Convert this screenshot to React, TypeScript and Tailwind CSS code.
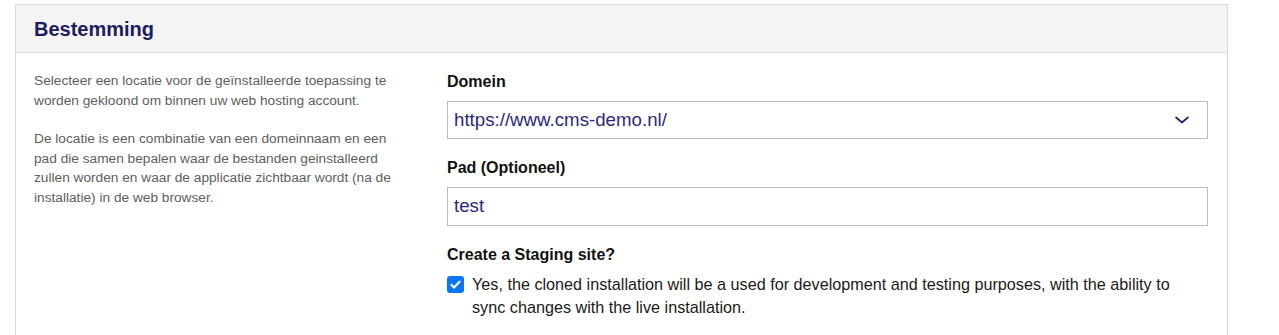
import React from "react";

export default function App() {
  return (
    <div className="w-[1279px] h-[335px] overflow-hidden bg-white pt-[4px]" style={{ fontFamily: '"Liberation Sans", Arial, sans-serif' }}>
      <div className="ml-[15px] w-[1213px] h-[400px] border border-[#dcdcdc] bg-white">
        <div className="h-[48px] bg-[#f4f4f4] border-b border-[#dcdcdc] pl-[18px] flex items-center">
          <h2 className="text-[20px] font-bold text-[#1d1d5e] leading-none pt-[1px]">Bestemming</h2>
        </div>
        <div className="flex pl-[18px] pr-[19px] pt-[18px]">
          <div className="w-[366px] text-[13.7px] leading-[19.5px] text-[#5e5e5e]">
            <p>Selecteer een locatie voor de geïnstalleerde toepassing te worden gekloond om binnen uw web hosting account.</p>
            <p className="mt-[19px]">De locatie is een combinatie van een domeinnaam en een pad die samen bepalen waar de bestanden geinstalleerd zullen worden en waar de applicatie zichtbaar wordt (na de installatie) in de web browser.</p>
          </div>
          <div className="ml-[47px] flex-1 flex flex-col pt-[1px]">
            <label className="text-[16px] leading-[20px] font-bold text-[#111]">Domein</label>
            <div className="mt-[9px] h-[38px] border border-[#bdbdbd] flex items-center justify-between pl-[6px] pr-[15px]">
              <span className="text-[18.7px] text-[#2a2a7c]">https://www.cms-demo.nl/</span>
              <svg width="20" height="20" viewBox="0 0 24 24" fill="none" stroke="#23237a" strokeWidth="2.2" strokeLinecap="round" strokeLinejoin="round">
                <path d="M5 9l7 6 7-6" />
              </svg>
            </div>
            <label className="mt-[19px] text-[16px] leading-[20px] font-bold text-[#111]">Pad (Optioneel)</label>
            <div className="mt-[9px] h-[39px] border border-[#bdbdbd] flex items-center pl-[6px]">
              <span className="text-[18.7px] text-[#2a2a7c]">test</span>
            </div>
            <label className="mt-[19px] text-[16px] leading-[20px] font-bold text-[#111]">Create a Staging site?</label>
            <div className="mt-[8px] flex items-start">
              <div className="mt-[3px] w-[17px] h-[17px] rounded-[3px] bg-[#0b75f2] flex items-center justify-center shrink-0">
                <svg width="13" height="13" viewBox="0 0 16 16" fill="none" stroke="white" strokeWidth="2.6" strokeLinecap="round" strokeLinejoin="round">
                  <path d="M3 8.5l3.2 3.2L13 4.5" />
                </svg>
              </div>
              <p className="ml-[8px] w-[715px] text-[16.2px] leading-[23px] text-[#1a1a1a]">
                Yes, the cloned installation will be a used for development and testing purposes, with the ability to sync changes with the live installation.
              </p>
            </div>
          </div>
        </div>
      </div>
    </div>
  );
}
